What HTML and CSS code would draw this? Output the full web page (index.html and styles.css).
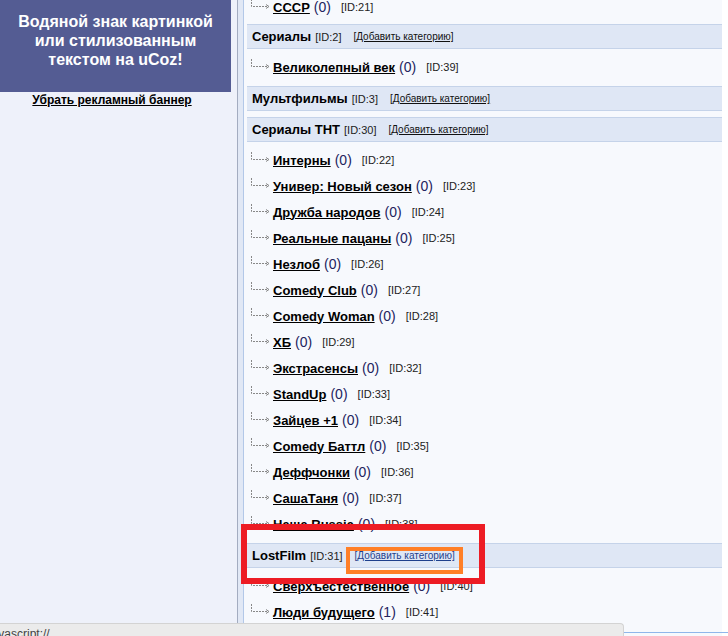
FILE: index.html
```html
<!DOCTYPE html>
<html lang="ru">
<head>
<meta charset="utf-8">
<title>Категории</title>
<link rel="stylesheet" href="styles.css">
</head>
<body>
<div class="page">
  <aside class="sidebar">
    <div class="banner">Водяной знак картинкой или стилизованным текстом на uCoz!</div>
    <a class="remove-banner" href="#">Убрать рекламный баннер</a>
  </aside>
  <div class="strip"></div>
  <main class="main">
    <div class="cat first">
      <ul class="subs">
        <li class="sub"><svg class="tree" width="20" height="10" viewBox="0 0 20 10"><path d="M0.5 0V7.5H17" fill="none" stroke="#888" stroke-dasharray="2 1"/><path d="M15 5.5L18 7.5L15 9.5" fill="none" stroke="#888"/></svg><a href="#">СССР</a><span class="cnt">(0)</span><span class="id">[ID:21]</span></li>
      </ul>
    </div>
    <div class="cat">
      <div class="head"><b>Сериалы</b><span class="id">[ID:2]</span><a class="add" href="#">[Добавить категорию]</a></div>
      <ul class="subs">
        <li class="sub"><svg class="tree" width="20" height="10" viewBox="0 0 20 10"><path d="M0.5 0V7.5H17" fill="none" stroke="#888" stroke-dasharray="2 1"/><path d="M15 5.5L18 7.5L15 9.5" fill="none" stroke="#888"/></svg><a href="#">Великолепный век</a><span class="cnt">(0)</span><span class="id">[ID:39]</span></li>
      </ul>
    </div>
    <div class="cat">
      <div class="head"><b>Мультфильмы</b><span class="id">[ID:3]</span><a class="add" href="#">[Добавить категорию]</a></div>
    </div>
    <div class="cat">
      <div class="head"><b>Сериалы ТНТ</b><span class="id">[ID:30]</span><a class="add" href="#">[Добавить категорию]</a></div>
      <ul class="subs">
        <li class="sub"><svg class="tree" width="20" height="10" viewBox="0 0 20 10"><path d="M0.5 0V7.5H17" fill="none" stroke="#888" stroke-dasharray="2 1"/><path d="M15 5.5L18 7.5L15 9.5" fill="none" stroke="#888"/></svg><a href="#">Интерны</a><span class="cnt">(0)</span><span class="id">[ID:22]</span></li>
        <li class="sub"><svg class="tree" width="20" height="10" viewBox="0 0 20 10"><path d="M0.5 0V7.5H17" fill="none" stroke="#888" stroke-dasharray="2 1"/><path d="M15 5.5L18 7.5L15 9.5" fill="none" stroke="#888"/></svg><a href="#">Универ: Новый сезон</a><span class="cnt">(0)</span><span class="id">[ID:23]</span></li>
        <li class="sub"><svg class="tree" width="20" height="10" viewBox="0 0 20 10"><path d="M0.5 0V7.5H17" fill="none" stroke="#888" stroke-dasharray="2 1"/><path d="M15 5.5L18 7.5L15 9.5" fill="none" stroke="#888"/></svg><a href="#">Дружба народов</a><span class="cnt">(0)</span><span class="id">[ID:24]</span></li>
        <li class="sub"><svg class="tree" width="20" height="10" viewBox="0 0 20 10"><path d="M0.5 0V7.5H17" fill="none" stroke="#888" stroke-dasharray="2 1"/><path d="M15 5.5L18 7.5L15 9.5" fill="none" stroke="#888"/></svg><a href="#">Реальные пацаны</a><span class="cnt">(0)</span><span class="id">[ID:25]</span></li>
        <li class="sub"><svg class="tree" width="20" height="10" viewBox="0 0 20 10"><path d="M0.5 0V7.5H17" fill="none" stroke="#888" stroke-dasharray="2 1"/><path d="M15 5.5L18 7.5L15 9.5" fill="none" stroke="#888"/></svg><a href="#">Незлоб</a><span class="cnt">(0)</span><span class="id">[ID:26]</span></li>
        <li class="sub"><svg class="tree" width="20" height="10" viewBox="0 0 20 10"><path d="M0.5 0V7.5H17" fill="none" stroke="#888" stroke-dasharray="2 1"/><path d="M15 5.5L18 7.5L15 9.5" fill="none" stroke="#888"/></svg><a href="#">Comedy Club</a><span class="cnt">(0)</span><span class="id">[ID:27]</span></li>
        <li class="sub"><svg class="tree" width="20" height="10" viewBox="0 0 20 10"><path d="M0.5 0V7.5H17" fill="none" stroke="#888" stroke-dasharray="2 1"/><path d="M15 5.5L18 7.5L15 9.5" fill="none" stroke="#888"/></svg><a href="#">Comedy Woman</a><span class="cnt">(0)</span><span class="id">[ID:28]</span></li>
        <li class="sub"><svg class="tree" width="20" height="10" viewBox="0 0 20 10"><path d="M0.5 0V7.5H17" fill="none" stroke="#888" stroke-dasharray="2 1"/><path d="M15 5.5L18 7.5L15 9.5" fill="none" stroke="#888"/></svg><a href="#">ХБ</a><span class="cnt">(0)</span><span class="id">[ID:29]</span></li>
        <li class="sub"><svg class="tree" width="20" height="10" viewBox="0 0 20 10"><path d="M0.5 0V7.5H17" fill="none" stroke="#888" stroke-dasharray="2 1"/><path d="M15 5.5L18 7.5L15 9.5" fill="none" stroke="#888"/></svg><a href="#">Экстрасенсы</a><span class="cnt">(0)</span><span class="id">[ID:32]</span></li>
        <li class="sub"><svg class="tree" width="20" height="10" viewBox="0 0 20 10"><path d="M0.5 0V7.5H17" fill="none" stroke="#888" stroke-dasharray="2 1"/><path d="M15 5.5L18 7.5L15 9.5" fill="none" stroke="#888"/></svg><a href="#">StandUp</a><span class="cnt">(0)</span><span class="id">[ID:33]</span></li>
        <li class="sub"><svg class="tree" width="20" height="10" viewBox="0 0 20 10"><path d="M0.5 0V7.5H17" fill="none" stroke="#888" stroke-dasharray="2 1"/><path d="M15 5.5L18 7.5L15 9.5" fill="none" stroke="#888"/></svg><a href="#">Зайцев +1</a><span class="cnt">(0)</span><span class="id">[ID:34]</span></li>
        <li class="sub"><svg class="tree" width="20" height="10" viewBox="0 0 20 10"><path d="M0.5 0V7.5H17" fill="none" stroke="#888" stroke-dasharray="2 1"/><path d="M15 5.5L18 7.5L15 9.5" fill="none" stroke="#888"/></svg><a href="#">Comedy Баттл</a><span class="cnt">(0)</span><span class="id">[ID:35]</span></li>
        <li class="sub"><svg class="tree" width="20" height="10" viewBox="0 0 20 10"><path d="M0.5 0V7.5H17" fill="none" stroke="#888" stroke-dasharray="2 1"/><path d="M15 5.5L18 7.5L15 9.5" fill="none" stroke="#888"/></svg><a href="#">Деффчонки</a><span class="cnt">(0)</span><span class="id">[ID:36]</span></li>
        <li class="sub"><svg class="tree" width="20" height="10" viewBox="0 0 20 10"><path d="M0.5 0V7.5H17" fill="none" stroke="#888" stroke-dasharray="2 1"/><path d="M15 5.5L18 7.5L15 9.5" fill="none" stroke="#888"/></svg><a href="#">СашаТаня</a><span class="cnt">(0)</span><span class="id">[ID:37]</span></li>
        <li class="sub"><svg class="tree" width="20" height="10" viewBox="0 0 20 10"><path d="M0.5 0V7.5H17" fill="none" stroke="#888" stroke-dasharray="2 1"/><path d="M15 5.5L18 7.5L15 9.5" fill="none" stroke="#888"/></svg><a href="#">Наша Russia</a><span class="cnt">(0)</span><span class="id">[ID:38]</span></li>
      </ul>
    </div>
    <div class="cat">
      <div class="head"><b>LostFilm</b><span class="id">[ID:31]</span><a class="add visited" href="#">[Добавить категорию]</a></div>
      <ul class="subs">
        <li class="sub"><svg class="tree" width="20" height="10" viewBox="0 0 20 10"><path d="M0.5 0V7.5H17" fill="none" stroke="#888" stroke-dasharray="2 1"/><path d="M15 5.5L18 7.5L15 9.5" fill="none" stroke="#888"/></svg><a href="#">Сверхъестественное</a><span class="cnt">(0)</span><span class="id">[ID:40]</span></li>
        <li class="sub"><svg class="tree" width="20" height="10" viewBox="0 0 20 10"><path d="M0.5 0V7.5H17" fill="none" stroke="#888" stroke-dasharray="2 1"/><path d="M15 5.5L18 7.5L15 9.5" fill="none" stroke="#888"/></svg><a href="#">Люди будущего</a><span class="cnt">(1)</span><span class="id">[ID:41]</span></li>
      </ul>
    </div>
  </main>
</div>
<div class="mark-red"></div>
<div class="mark-orange"></div>
<div class="page-line"></div>
<div class="statusbar"><span>javascript://</span></div>
</body>
</html>
```

FILE: styles.css
```css
html, body {
  margin: 0;
  padding: 0;
  background: #ffffff;
  height: 636px;
  overflow: hidden;
  font-family: "Liberation Sans", Arial, sans-serif;
}

.page {
  display: flex;
  width: 722px;
  height: 636px;
}

.sidebar {
  flex: none;
  width: 238px;
  box-sizing: border-box;
  background: #eef1fa;
  border-right: 1px solid #a3acc0;
}

.banner {
  width: 231px;
  height: 92px;
  box-sizing: border-box;
  background: #545c93;
  color: #ffffff;
  font-weight: bold;
  font-size: 16px;
  line-height: 19px;
  text-align: center;
  padding: 12px 14px 0;
}

.remove-banner {
  display: block;
  width: 224px;
  text-align: center;
  margin-top: 1px;
  font-size: 12px;
  font-weight: bold;
  color: #000;
  text-decoration: underline;
  line-height: 14px;
}

.strip {
  width: 5px;
  flex: none;
  background: #e1e8f5;
  border-right: 1px solid #b3c8e8;
}

.main {
  flex: 1;
  background: #f7f9fd;
  padding-left: 3px;
}

.cat {
  margin-bottom: 6px;
}

.cat.first {
  margin-top: -11px;
  margin-bottom: 4px;
}

.head {
  height: 23px;
  background: #dfe7f5;
  border-top: 1px solid #c5d3e9;
  border-bottom: 1px solid #c5d3e9;
  display: flex;
  align-items: center;
  padding-left: 5px;
  color: #000;
}

.head b {
  font-size: 13px;
}

.head .id {
  margin-left: 4px;
}

.add {
  font-size: 10px;
  color: #111;
  text-decoration: underline;
  margin-left: 12px;
}

.add.visited {
  color: #1e3f8c;
}

.subs {
  list-style: none;
  margin: 0;
  padding: 5px 0 0 0;
}

.sub {
  height: 26px;
  display: flex;
  align-items: center;
  padding-left: 4px;
}

.tree {
  flex: none;
  align-self: flex-start;
  margin-top: 5px;
  margin-right: 2px;
}

.sub a {
  font-size: 13px;
  font-weight: bold;
  color: #000;
  text-decoration: underline;
}

.cnt {
  font-size: 14px;
  color: #23235e;
  margin-left: 4px;
}

.id {
  font-size: 11px;
  color: #222;
  margin-left: 10px;
}

.mark-red {
  position: absolute;
  left: 241px;
  top: 524px;
  width: 232px;
  height: 48px;
  border: 6px solid #ed1c24;
}

.mark-orange {
  position: absolute;
  left: 346px;
  top: 547px;
  width: 109px;
  height: 19px;
  border: 4px solid #ff7f27;
}

.page-line {
  position: absolute;
  left: 624px;
  top: 632px;
  width: 104px;
  height: 1px;
  background: #8fb6ea;
}

.statusbar {
  position: absolute;
  left: 0;
  top: 623px;
  width: 623px;
  height: 20px;
  background: #ebebeb;
  border-top: 1px solid #d3d3d3;
  border-right: 1px solid #d3d3d3;
  border-top-right-radius: 4px;
  overflow: hidden;
  font-size: 12px;
  color: #444;
  line-height: 14px;
}

.statusbar span {
  display: block;
  margin-left: -11px;
  padding-top: 3px;
}
```
